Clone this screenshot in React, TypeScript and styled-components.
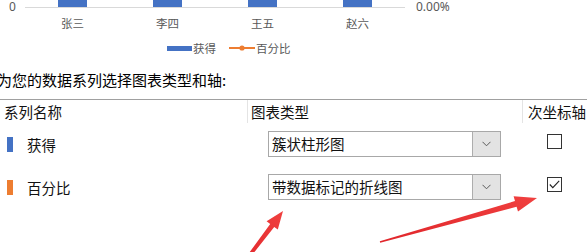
import React from "react";
import styled, { createGlobalStyle } from "styled-components";

const GlobalStyle = createGlobalStyle`
  html, body { margin: 0; padding: 0; background: #ffffff; }
  body { font-family: "Noto Sans", "Noto Sans CJK SC", sans-serif; }
`;

const Page = styled.div`
  position: relative;
  width: 587px;
  height: 252px;
  overflow: hidden;
  background: #ffffff;
`;

const ChartTop = styled.div`
  display: flex;
  align-items: flex-start;
  height: 14px;
`;

const AxisLabel = styled.div<{ $pad?: number }>`
  width: ${(p) => (p.$pad !== undefined ? "auto" : "25px")};
  box-sizing: border-box;
  padding-left: ${(p) => (p.$pad !== undefined ? 0 : 9)}px;
  margin-left: ${(p) => p.$pad ?? 0}px;
  font-size: 12px;
  line-height: 14px;
  color: #595959;
`;

const Plot = styled.div`
  width: 380px;
  height: 7px;
  border-bottom: 1px solid #d9d9d9;
  display: grid;
  grid-template-columns: repeat(4, 95px);
`;

const BarCell = styled.div`
  display: flex;
  justify-content: center;
`;

const Bar = styled.div`
  width: 29px;
  height: 7px;
  background: #4472c4;
`;

const Categories = styled.div`
  margin-top: 1px;
  margin-left: 25px;
  display: grid;
  grid-template-columns: repeat(4, 95px);
  font-family: "Noto Sans CJK SC", sans-serif;
  font-size: 11.5px;
  line-height: 16px;
  color: #595959;
  text-align: center;
`;

const Legend = styled.div`
  margin-top: 9px;
  padding-left: 167px;
  height: 16px;
  display: flex;
  align-items: center;
  font-family: "Noto Sans CJK SC", sans-serif;
  font-size: 11.5px;
  line-height: 16px;
  color: #595959;
`;

const LegendSwatch = styled.div`
  width: 25px;
  height: 5px;
  background: #4472c4;
  margin-right: 1px;
`;

const LegendText = styled.span<{ $gap?: number }>`
  margin-right: ${(p) => p.$gap ?? 0}px;
`;

const Title = styled.div`
  margin-top: 14px;
  margin-left: -3px;
  font-family: "Noto Sans CJK SC", sans-serif;
  font-size: 15px;
  line-height: 20px;
  color: #000000;
  white-space: nowrap;
`;

const Table = styled.div`
  margin-top: 9px;
  border-top: 1px solid #a0a0a0;
  font-family: "Noto Sans CJK SC", sans-serif;
  font-size: 14.5px;
  color: #111111;
`;

const HeaderRow = styled.div`
  display: grid;
  grid-template-columns: 247px 275px 1fr;
  height: 23px;
  line-height: 23px;
  margin-bottom: 1px;
`;

const HeaderCell = styled.div<{ $pad: number; $divider?: boolean }>`
  padding-left: ${(p) => p.$pad}px;
  border-left: ${(p) => (p.$divider ? "1px solid #e4e4e4" : "none")};
  white-space: nowrap;
  overflow: hidden;
`;

const Rows = styled.div`
  padding-top: 7px;
  display: flex;
  flex-direction: column;
  gap: 17px;
`;

const Row = styled.div`
  display: grid;
  grid-template-columns: 247px 275px 1fr;
  height: 26px;
  align-items: center;
`;

const NameCell = styled.div`
  display: flex;
  align-items: center;
  gap: 14px;
  padding-left: 7px;
`;

const Swatch = styled.div<{ $color: string }>`
  width: 6px;
  height: 15px;
  background: ${(p) => p.$color};
`;

const TypeCell = styled.div`
  padding-left: 21px;
`;

const Select = styled.div`
  width: 233px;
  height: 26px;
  box-sizing: border-box;
  border: 1px solid #a8a8a8;
  display: flex;
  background: #ffffff;
`;

const SelectText = styled.div`
  flex: 1;
  padding-left: 3px;
  line-height: 24px;
  white-space: nowrap;
`;

const SelectButton = styled.div`
  width: 27px;
  background: #e3e3e3;
  border-left: 1px solid #adadad;
  display: flex;
  align-items: center;
  justify-content: center;
`;

const CheckCell = styled.div`
  padding-left: 25px;
  display: flex;
  align-items: center;
`;

const Checkbox = styled.div`
  width: 15px;
  height: 15px;
  box-sizing: border-box;
  border: 1px solid #333333;
  background: #ffffff;
  margin-bottom: 6px;
  display: flex;
  align-items: center;
  justify-content: center;
`;

const Overlay = styled.svg`
  position: absolute;
  left: 0;
  top: 0;
  pointer-events: none;
`;

const Chevron = () => (
  <svg width="9" height="6" viewBox="0 0 9 6">
    <polyline points="0.5,0.8 4.5,4.8 8.5,0.8" fill="none" stroke="#5a5a5a" strokeWidth="1" />
  </svg>
);

const CheckMark = () => (
  <svg width="11" height="9" viewBox="0 0 11 9">
    <polyline points="0.8,4.5 3.8,7.6 10.2,0.8" fill="none" stroke="#222" strokeWidth="1.1" />
  </svg>
);

const LineMarker = () => (
  <svg width="26" height="8" viewBox="0 0 26 8" style={{ marginRight: 1 }}>
    <line x1="0" y1="4" x2="26" y2="4" stroke="#ed7d31" strokeWidth="2" />
    <circle cx="13" cy="4" r="2.6" fill="#ed7d31" />
  </svg>
);

const categories = ["张三", "李四", "王五", "赵六"];

const series = [
  { name: "获得", color: "#4472c4", type: "簇状柱形图", secondary: false },
  { name: "百分比", color: "#ed7d31", type: "带数据标记的折线图", secondary: true },
];

export default function App() {
  return (
    <Page>
      <GlobalStyle />
      <ChartTop>
        <AxisLabel>0</AxisLabel>
        <Plot>
          {categories.map((c) => (
            <BarCell key={c}>
              <Bar />
            </BarCell>
          ))}
        </Plot>
        <AxisLabel $pad={11}>0.00%</AxisLabel>
      </ChartTop>
      <Categories>
        {categories.map((c) => (
          <div key={c}>{c}</div>
        ))}
      </Categories>
      <Legend>
        <LegendSwatch />
        <LegendText $gap={13}>获得</LegendText>
        <LineMarker />
        <LegendText>百分比</LegendText>
      </Legend>
      <Title>为您的数据系列选择图表类型和轴:</Title>
      <Table>
        <HeaderRow>
          <HeaderCell $pad={4}>系列名称</HeaderCell>
          <HeaderCell $pad={3} $divider>图表类型</HeaderCell>
          <HeaderCell $pad={5} $divider>次坐标轴</HeaderCell>
        </HeaderRow>
        <Rows>
          {series.map((s) => (
            <Row key={s.name}>
              <NameCell>
                <Swatch $color={s.color} />
                <span>{s.name}</span>
              </NameCell>
              <TypeCell>
                <Select>
                  <SelectText>{s.type}</SelectText>
                  <SelectButton>
                    <Chevron />
                  </SelectButton>
                </Select>
              </TypeCell>
              <CheckCell>
                <Checkbox>{s.secondary && <CheckMark />}</Checkbox>
              </CheckCell>
            </Row>
          ))}
        </Rows>
      </Table>
      <Overlay width="587" height="252" viewBox="0 0 587 252">
        <defs>
          <linearGradient id="redA" x1="0" y1="1" x2="1" y2="0">
            <stop offset="0" stopColor="#e0262b" />
            <stop offset="1" stopColor="#f0403f" />
          </linearGradient>
        </defs>
        <polygon
          fill="url(#redA)"
          points="238.8,267.1 270.2,223.9 266.6,221.2 283,211 277.8,229.6 274.2,226.9 241.2,268.9"
        />
        <polygon
          fill="url(#redA)"
          points="379.8,241.3 515.0,201.0 513.6,196.2 537,198 518.0,211.6 516.6,206.8 380.2,242.7"
        />
      </Overlay>
    </Page>
  );
}
